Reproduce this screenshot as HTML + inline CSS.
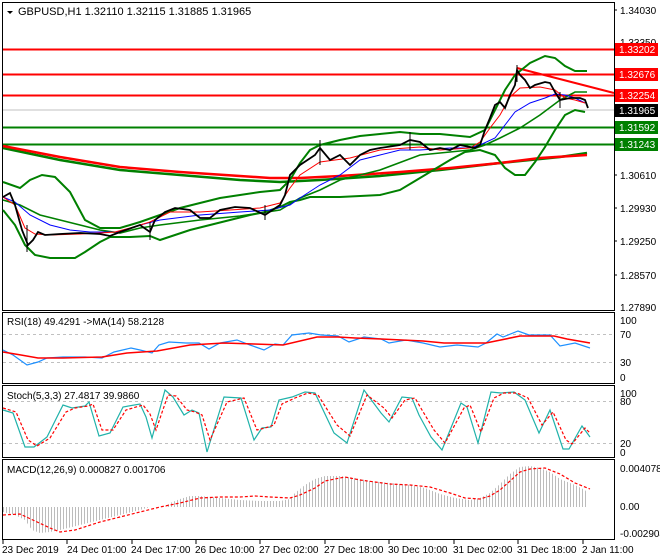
<!DOCTYPE html>
<html><head><meta charset="utf-8"><style>
html,body{margin:0;padding:0;background:#fff;}
svg{display:block;font-family:"Liberation Sans",sans-serif;}
</style></head><body>
<svg width="660" height="560" viewBox="0 0 660 560" xmlns="http://www.w3.org/2000/svg">
<defs>
<pattern id="hist" width="3" height="10" patternUnits="userSpaceOnUse"><rect x="0" y="0" width="1" height="10" fill="#bcbcbc"/></pattern>
</defs>
<rect width="660" height="560" fill="#fff"/>
<rect x="2.5" y="2.5" width="612" height="308" fill="none" stroke="#000"/>
<rect x="2.5" y="312.5" width="612" height="71" fill="none" stroke="#000"/>
<rect x="2.5" y="385.5" width="612" height="72" fill="none" stroke="#000"/>
<rect x="2.5" y="459.5" width="612" height="80" fill="none" stroke="#000"/>

<line x1="3" y1="110" x2="614" y2="110" stroke="#c0c0c0"/>
<g stroke="#ff0000" stroke-width="2">
<line x1="3" y1="49.5" x2="614" y2="49.5"/>
<line x1="3" y1="74.5" x2="614" y2="74.5"/>
<line x1="3" y1="95.5" x2="614" y2="95.5"/>
<line x1="517" y1="68" x2="614" y2="93"/>
</g>
<g stroke="#008000" stroke-width="2">
<line x1="3" y1="127.5" x2="614" y2="127.5"/>
<line x1="3" y1="144.5" x2="614" y2="144.5"/>
</g>
<polyline fill="none" stroke="#008000" stroke-width="2.5" points="3,148 60,160 120,170 180,175 240,180 280,182 320,180 380,176 440,170 500,163 560,157 587,153"/>
<polyline fill="none" stroke="#ff0000" stroke-width="2.5" points="3,146 60,157 120,167 180,172 240,176 270,178 300,178 340,176 400,172 450,168 500,163 540,158 587,155"/>
<g fill="none" stroke="#008000" stroke-width="2">
<polyline points="3,182 20,188 30,180 42,175 55,177 70,192 85,220 100,228 120,228 140,222 160,215 180,208 200,203 220,198 240,195 260,192 280,190 290,180 300,163 310,150 320,145 340,140 360,136 380,134 400,132 420,134 440,134 470,137 485,130 495,110 505,90 515,75 530,63 545,56 555,58 565,66 575,71 587,71"/>
<polyline points="3,210 15,225 25,245 35,255 50,258 60,258 75,258 85,252 100,242 110,237 130,237 150,236 160,240 175,235 190,230 210,225 230,220 250,215 265,212 280,207 290,202 300,200 310,197 325,197 340,197 380,195 400,190 415,181 430,172 450,160 465,152 480,150 495,155 505,168 515,175 525,175 535,162 545,147 555,130 565,115 575,110 585,112"/>
<polyline stroke-width="1.6" points="3,200 20,205 40,215 60,220 80,225 100,230 120,233 140,228 160,225 200,220 240,216 280,210 300,198 320,190 340,180 380,170 420,155 450,152 470,150 485,145 500,138 520,128 540,115 560,100 575,92 587,92"/>
</g>
<polyline fill="none" stroke="#0000ff" stroke-width="1" points="3,197 15,202 30,215 50,225 70,230 90,232 120,232 140,225 160,220 200,215 240,212 270,210 290,205 300,198 320,185 340,175 360,160 380,155 400,150 420,150 450,148 470,148 480,145 495,138 505,125 515,112 530,103 545,98 555,94 565,95 575,98 585,103"/>
<polyline fill="none" stroke="#ff0000" stroke-width="1" points="3,197 15,205 25,228 35,234 50,235 80,234 100,233 115,232 130,228 150,222 170,212 200,212 230,210 260,208 280,203 290,188 300,175 320,162 350,158 380,150 420,147 440,150 470,148 480,142 490,128 500,115 510,97 520,88 540,87 555,90 565,98 575,100 585,103"/>
<polyline fill="none" stroke="#000" stroke-width="1.8" points="3,197 10,193 15,205 22,230 28,245 33,240 38,232 45,235 60,234 80,233 100,234 110,236 120,232 140,225 150,232 155,220 165,212 175,208 190,210 200,218 210,218 220,210 235,207 250,208 265,215 280,205 285,195 290,175 300,165 315,155 320,148 330,160 340,155 350,165 360,155 370,150 380,148 400,145 410,140 420,142 430,150 440,148 450,150 460,145 475,148 480,145 485,130 490,118 495,105 500,102 505,108 510,95 515,85 517,70 520,75 525,80 530,88 535,85 545,82 550,83 555,92 560,100 570,98 580,98 585,100 588,108"/>
<g stroke="#000" stroke-width="1">
<line x1="27" y1="225" x2="27" y2="252"/><line x1="150" y1="222" x2="150" y2="240"/><line x1="265" y1="205" x2="265" y2="220"/><line x1="320" y1="140" x2="320" y2="165"/><line x1="410" y1="132" x2="410" y2="150"/><line x1="517" y1="65" x2="517" y2="82"/><line x1="560" y1="92" x2="560" y2="108"/>
</g>

<g stroke="#c0c0c0" stroke-dasharray="3,3"><line x1="3" y1="334.5" x2="614" y2="334.5"/><line x1="3" y1="362.5" x2="614" y2="362.5"/></g>
<polyline fill="none" stroke="#1e90ff" stroke-width="1.2" points="3,350 13,355 27,365 38,362 47,358 63,357 85,357 102,358 114,352 131,348 140,350 152,353 159,345 169,342 186,343 199,343 209,349 220,343 237,340 250,345 264,350 275,344 283,345 292,335 309,333 321,335 338,336 349,342 364,337 381,339 389,343 406,340 423,343 440,347 457,345 478,347 486,343 497,334 503,337 518,331 529,335 550,335 560,346 575,343 590,348"/>
<polyline fill="none" stroke="#ff0000" stroke-width="1.6" points="3,352 21,355 38,358 63,358 102,357 127,353 157,351 190,345 224,343 254,344 283,345 317,337 338,337 355,338 381,339 423,341 444,343 486,343 520,336 554,336 567,339 590,343"/>

<g stroke="#c0c0c0" stroke-dasharray="3,3"><line x1="3" y1="401.5" x2="614" y2="401.5"/><line x1="3" y1="443.5" x2="614" y2="443.5"/></g>
<polyline fill="none" stroke="#20b2aa" stroke-width="1.2" points="3,410 13,413 25,447 34,447 47,437 63,405 72,408 85,406 89,402 99,436 110,433 123,407 140,404 146,417 152,438 165,390 173,397 184,415 192,410 199,413 207,452 224,397 241,398 254,440 262,428 271,427 279,400 292,397 305,392 315,393 334,433 347,443 364,390 381,413 389,422 402,397 412,398 419,415 431,437 442,450 461,403 467,407 478,443 491,392 501,393 514,392 525,400 539,433 550,410 563,449 569,449 582,426 590,437"/>
<polyline fill="none" stroke="#ff0000" stroke-width="1.2" stroke-dasharray="3,2" points="3,408 16,412 28,440 37,446 50,438 66,412 75,408 88,406 93,404 102,430 113,430 126,410 143,405 150,414 156,430 168,395 176,396 187,410 195,412 202,415 210,440 227,402 244,398 257,430 265,428 274,425 282,404 295,398 308,393 318,395 337,425 350,436 367,395 384,408 392,418 405,400 415,398 422,410 434,430 445,443 464,408 470,405 481,432 494,398 504,393 517,393 528,398 542,425 553,412 566,440 572,444 585,428 590,433"/>

<polygon fill="url(#hist)" points="3,507 3,512 15,515 25,520 32,530 40,533 50,532 60,530 80,525 100,520 120,515 140,510 150,507 165,507 170,503 180,499 190,496 200,496 220,498 240,500 260,501 280,501 290,499 295,493 305,485 315,479 325,476 340,476 355,478 370,481 390,483 410,485 425,488 440,494 455,498 470,500 480,498 490,493 500,484 510,474 520,467 530,466 540,468 550,472 560,479 575,485 585,490 588,494 588,507"/>
<polyline fill="none" stroke="#ff0000" stroke-width="1.2" stroke-dasharray="3,2" points="3,515 20,514 35,521 50,528 60,532 75,530 100,522 120,517 140,512 160,507 180,503 200,498 220,497 240,497 255,496 270,497 290,498 300,495 315,488 325,481 335,479 345,477 360,480 375,482 390,484 410,485 430,487 450,493 465,498 480,499 490,496 500,490 510,481 520,472 530,469 545,468 560,474 575,483 590,489"/>

<polygon points="7,11 13,11 10,14" fill="#000"/>
<text x="18" y="15" font-size="11" fill="#000">GBPUSD,H1  1.32110 1.32115 1.31885 1.31965</text>
<text x="7" y="325" font-size="10" fill="#000">RSI(18) 49.4291  -&gt;MA(14) 58.2128</text>
<text x="7" y="399" font-size="10" fill="#000">Stoch(5,3,3) 27.4817 39.9860</text>
<text x="7" y="473" font-size="10" fill="#000">MACD(12,26,9) 0.000827 0.001706</text>

<g font-size="10" fill="#000">
<text x="620" y="14">1.34030</text>
<text x="620" y="46">1.33350</text>
<text x="620" y="179">1.30610</text>
<text x="620" y="212">1.29930</text>
<text x="620" y="245">1.29250</text>
<text x="620" y="279">1.28570</text>
<text x="620" y="311">1.27890</text>
<text x="620" y="324">100</text>
<text x="620" y="338">70</text>
<text x="620" y="366">30</text>
<text x="620" y="381">0</text>
<text x="620" y="397">100</text>
<text x="620" y="405">80</text>
<text x="620" y="447">20</text>
<text x="620" y="456">0</text>
<text x="620" y="472">0.004078</text>
<text x="620" y="510">0.00</text>
<text x="620" y="537">-0.002904</text>
</g>
<g stroke="#000"><line x1="614" y1="10" x2="617" y2="10"/><line x1="614" y1="175" x2="617" y2="175"/><line x1="614" y1="208" x2="617" y2="208"/><line x1="614" y1="241" x2="617" y2="241"/><line x1="614" y1="275" x2="617" y2="275"/></g>
<rect x="615" y="43" width="43" height="13" fill="#ff0000"/><text x="619" y="53" font-size="10" fill="#fff">1.33202</text>
<rect x="615" y="68" width="43" height="13" fill="#ff0000"/><text x="619" y="78" font-size="10" fill="#fff">1.32676</text>
<rect x="615" y="89" width="43" height="13" fill="#ff0000"/><text x="619" y="99" font-size="10" fill="#fff">1.32254</text>
<rect x="615" y="104" width="43" height="13" fill="#000"/><text x="619" y="114" font-size="10" fill="#fff">1.31965</text>
<rect x="615" y="121" width="43" height="13" fill="#008000"/><text x="619" y="131" font-size="10" fill="#fff">1.31592</text>
<rect x="615" y="138" width="43" height="13" fill="#008000"/><text x="619" y="148" font-size="10" fill="#fff">1.31243</text>

<g stroke="#000"><line x1="3" y1="540" x2="3" y2="544"/><line x1="67" y1="540" x2="67" y2="544"/><line x1="132" y1="540" x2="132" y2="544"/><line x1="196" y1="540" x2="196" y2="544"/><line x1="260" y1="540" x2="260" y2="544"/><line x1="325" y1="540" x2="325" y2="544"/><line x1="389" y1="540" x2="389" y2="544"/><line x1="454" y1="540" x2="454" y2="544"/><line x1="518" y1="540" x2="518" y2="544"/><line x1="583" y1="540" x2="583" y2="544"/></g>
<g font-size="10" fill="#000">
<text x="2" y="553">23 Dec 2019</text>
<text x="67" y="553">24 Dec 01:00</text>
<text x="131" y="553">24 Dec 17:00</text>
<text x="195" y="553">26 Dec 10:00</text>
<text x="259" y="553">27 Dec 02:00</text>
<text x="324" y="553">27 Dec 18:00</text>
<text x="388" y="553">30 Dec 10:00</text>
<text x="453" y="553">31 Dec 02:00</text>
<text x="517" y="553">31 Dec 18:00</text>
<text x="582" y="553">2 Jan 11:00</text>
</g>
</svg>
</body></html>
